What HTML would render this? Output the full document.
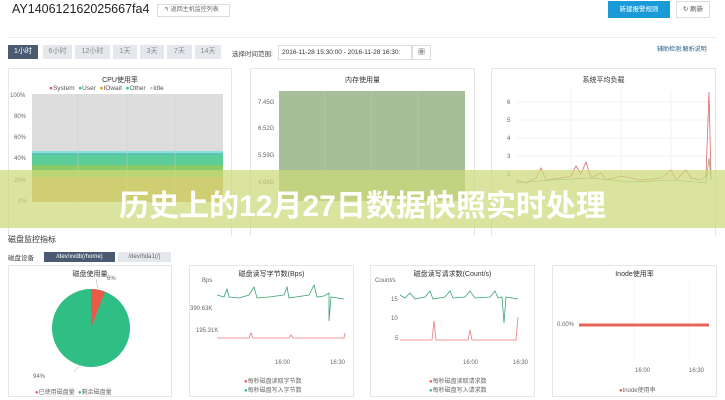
<!DOCTYPE html>
<html><head><meta charset="utf-8"><style>
*{margin:0;padding:0;box-sizing:border-box}
body{width:725px;height:400px;overflow:hidden;background:#fff;font-family:"Liberation Sans","Noto Sans CJK SC",sans-serif;color:#333;position:relative}
.a{position:absolute}
.tab{position:absolute;top:45px;height:14px;background:#e4e7ec;color:#888;font-size:7px;text-align:center;line-height:14px}
.panel{position:absolute;border:1px solid #e6e6e6;background:#fff}
.t{position:absolute;width:100%;text-align:center;font-size:7px;color:#333}
.s{font-size:6px;color:#666;position:absolute}
</style></head><body>
<div class="a" style="left:12px;top:2px;font-size:12.5px;color:#222;white-space:nowrap">AY140612162025667fa4</div>
<div class="a" style="left:157px;top:4px;width:73px;height:13px;border:1px solid #ddd;font-size:6px;color:#666;line-height:11px;padding-left:6px">↰ 返回主机监控列表</div>
<div class="a" style="left:608px;top:1px;width:62px;height:17px;background:#1a9ad6;color:#fff;font-size:6.5px;line-height:17px;text-align:center">新建报警规则</div>
<div class="a" style="left:676px;top:1px;width:34px;height:17px;border:1px solid #ddd;color:#555;font-size:6.5px;line-height:15px;text-align:center">↻ 刷新</div>
<div class="a" style="left:8px;top:37px;width:709px;height:1px;background:#eee"></div>
<div class="tab" style="left:8px;width:30px;background:#4a5a70;color:#fff">1小时</div>
<div class="tab" style="left:43px;width:29px">6小时</div>
<div class="tab" style="left:75px;width:35px">12小时</div>
<div class="tab" style="left:113px;width:24px">1天</div>
<div class="tab" style="left:140px;width:24px">3天</div>
<div class="tab" style="left:167px;width:25px">7天</div>
<div class="tab" style="left:195px;width:26px">14天</div>
<div class="a" style="left:232px;top:48px;font-size:6.5px;color:#444">选择时间范围:</div>
<div class="a" style="left:278px;top:45px;width:134px;height:15px;border:1px solid #ddd;font-size:6.5px;line-height:13px;padding-left:3px;white-space:nowrap;overflow:hidden">2016-11-28 15:30:00 - 2016-11-28 16:30:</div>
<div class="a" style="left:412px;top:45px;width:19px;height:15px;border:1px solid #ddd;font-size:7px;text-align:center;line-height:13px">▦</div>
<div class="a" style="left:657px;top:44px;font-size:6px;color:#1a5a8a">辅助检测:解析说明</div>

<div class="panel" style="left:8px;top:68px;width:224px;height:178px">
<div class="t" style="top:6px">CPU使用率</div>
<div class="s" style="left:40px;top:16px;color:#555;font-size:6.5px"><span style="color:#e55">●</span>System &nbsp;<span style="color:#3b9">●</span>User &nbsp;<span style="color:#e90">●</span>IOwait &nbsp;<span style="color:#2bc">●</span>Other &nbsp;<span style="color:#ccc">●</span>Idle</div>
</div>
<svg class="a" style="left:0;top:88px" width="232" height="125">
<g font-size="6" fill="#666" font-family="Liberation Sans"><text x="10" y="9">100%</text><text x="14" y="30">80%</text><text x="14" y="51">60%</text><text x="14" y="72">40%</text><text x="14" y="94">20%</text><text x="18" y="115">0%</text></g>
<rect x="32" y="6" width="191" height="108" fill="#ddd"/>
<rect x="32" y="63" width="191" height="5" fill="#8ddfd8"/>
<rect x="32" y="67" width="191" height="10" fill="#5ccc98"/>
<rect x="32" y="77" width="191" height="12" fill="#88cc6a"/>
<rect x="32" y="89" width="191" height="25" fill="#d8b060"/>
<path d="M32 66 L223 66" stroke="#2a9" stroke-width="1"/>
<g stroke="#ccc" stroke-width=".5"><path d="M78 6V114M127 6V114M175 6V114"/></g>
</svg>

<div class="panel" style="left:250px;top:68px;width:225px;height:178px"><div class="t" style="top:6px">内存使用量</div></div>
<svg class="a" style="left:250px;top:88px" width="225" height="125">
<g font-size="6" fill="#666" font-family="Liberation Sans"><text x="8" y="16">7.45G</text><text x="8" y="42">6.52G</text><text x="8" y="69">5.59G</text><text x="8" y="96">4.66G</text></g>
<rect x="29" y="3" width="186" height="110" fill="#a7bf98"/>
<g stroke="#b8ccaa" stroke-width=".5"><path d="M75 3V113M121 3V113M168 3V113"/></g>
</svg>

<div class="panel" style="left:491px;top:68px;width:225px;height:178px"><div class="t" style="top:6px">系统平均负载</div></div>
<svg class="a" style="left:491px;top:88px" width="225" height="130">
<g font-size="6" fill="#666" font-family="Liberation Sans"><text x="16" y="16">6</text><text x="16" y="34">5</text><text x="16" y="52">4</text><text x="16" y="70">3</text><text x="16" y="88">2</text></g>
<g stroke="#e6e6e6" stroke-width=".5"><path d="M25 14H220M25 32H220M25 50H220M25 68H220M25 86H220M80 2V110M130 2V110M180 2V110"/></g>
<path d="M25 92 L35 95 45 90 50 80 55 92 70 90 80 88 85 78 90 86 95 74 100 90 110 85 115 92 130 88 150 92 170 90 180 82 185 92 195 82 200 90 210 92 215 88 218 4 220 90" fill="none" stroke="#d66" stroke-width=".8"/>
<path d="M25 95 L60 92 100 90 140 94 180 92 215 95 218 70 220 92" fill="none" stroke="#8a8" stroke-width=".8"/>
</svg>

<div class="a" style="left:0;top:170px;width:725px;height:58px;background:rgba(205,218,120,.72)"></div>
<div class="a" style="left:0;top:181px;width:725px;text-align:center;font-size:30px;font-weight:bold;color:#fff">历史上的12月27日数据快照实时处理</div>
<div class="a" style="left:0;top:236px;width:725px;height:30px;background:#fff"></div>
<div class="a" style="left:8px;top:234px;font-size:8px;color:#333">磁盘监控指标</div>
<div class="a" style="left:8px;top:252px;font-size:6.5px;color:#444">磁盘设备</div>
<div class="a" style="left:44px;top:252px;width:71px;height:10px;background:#4a5a70;color:#fff;font-size:6px;line-height:10px;text-align:center">/dev/xvdb(/home)</div>
<div class="a" style="left:118px;top:252px;width:53px;height:10px;background:#e4e7ec;color:#666;font-size:6px;line-height:10px;text-align:center">/dev/hda1(/)</div>

<div class="panel" style="left:8px;top:265px;width:164px;height:132px"><div class="t" style="top:3px">磁盘使用量</div>
<div class="s" style="left:98px;top:10px">6%</div><div class="s" style="left:24px;top:108px">94%</div>
<div class="s" style="left:26px;top:121px"><span style="color:#e55">●</span>已使用磁盘量 &nbsp;<span style="color:#3b8">●</span>剩余磁盘量</div></div>
<svg class="a" style="left:8px;top:265px" width="164" height="130">
<ellipse cx="83" cy="63" rx="39" ry="39" fill="#2fbf85"/>
<path d="M83 63 L83 24 A39 39 0 0 1 97 26.6 Z" fill="#e85a4a"/>
<path d="M90 24 L88 14M72 100 L66 107" stroke="#aaa" stroke-width=".5"/>
</svg>

<div class="panel" style="left:189px;top:265px;width:165px;height:132px"><div class="t" style="top:3px">磁盘读写字节数(Bps)</div>
<div class="s" style="left:12px;top:12px">Bps</div><div class="s" style="left:0px;top:40px">390.63K</div><div class="s" style="left:6px;top:62px">195.31K</div>
<div class="s" style="left:85px;top:94px">16:00</div><div class="s" style="left:140px;top:94px">16:30</div>
<div class="s" style="left:54px;top:110px"><span style="color:#e55">●</span>每秒磁盘读取字节数<br><span style="color:#3b8">●</span>每秒磁盘写入字节数</div></div>
<svg class="a" style="left:189px;top:265px" width="165" height="90">
<path d="M28 30L35 32 38 24 40 32 50 33 60 30 65 22 68 33 80 32 95 30 98 22 100 33 120 30 125 20 128 32 135 31 140 28 140 56 142 32 155 34" fill="none" stroke="#3aa36f" stroke-width=".8"/>
<path d="M28 73L60 73 62 68 64 73 100 73 102 70 104 73 155 73 156 68" fill="none" stroke="#e77" stroke-width=".8"/>
</svg>

<div class="panel" style="left:370px;top:265px;width:165px;height:132px"><div class="t" style="top:3px">磁盘读写请求数(Count/s)</div>
<div class="s" style="left:4px;top:12px">Count/s</div><div class="s" style="left:20px;top:31px">15</div><div class="s" style="left:20px;top:50px">10</div><div class="s" style="left:24px;top:70px">5</div>
<div class="s" style="left:92px;top:94px">16:00</div><div class="s" style="left:142px;top:94px">16:30</div>
<div class="s" style="left:58px;top:110px"><span style="color:#e55">●</span>每秒磁盘读取请求数<br><span style="color:#3b8">●</span>每秒磁盘写入请求数</div></div>
<svg class="a" style="left:370px;top:265px" width="165" height="90">
<path d="M30 30L35 33 40 28 45 34 55 32 60 26 63 34 75 32 80 26 83 33 95 32 100 26 105 33 120 32 125 26 128 33 132 32 134 58 136 32 148 34" fill="none" stroke="#3aa36f" stroke-width=".8"/>
<path d="M30 75L62 75 64 56 66 75 98 75 100 65 102 75 146 75 148 52" fill="none" stroke="#e77" stroke-width=".8"/>
</svg>

<div class="panel" style="left:552px;top:265px;width:165px;height:132px"><div class="t" style="top:3px">Inode使用率</div>
<div class="s" style="left:4px;top:56px">0.00%</div>
<div class="s" style="left:82px;top:102px">16:00</div><div class="s" style="left:136px;top:102px">16:30</div>
<div class="s" style="left:66px;top:119px"><span style="color:#e55">●</span>Inode使用率</div></div>
<svg class="a" style="left:552px;top:265px" width="165" height="100">
<path d="M82 15V95M137 15V95" stroke="#eee" stroke-width=".5"/>
<path d="M27 60H157" stroke="#e8655a" stroke-width="3"/>
</svg>
</body></html>
